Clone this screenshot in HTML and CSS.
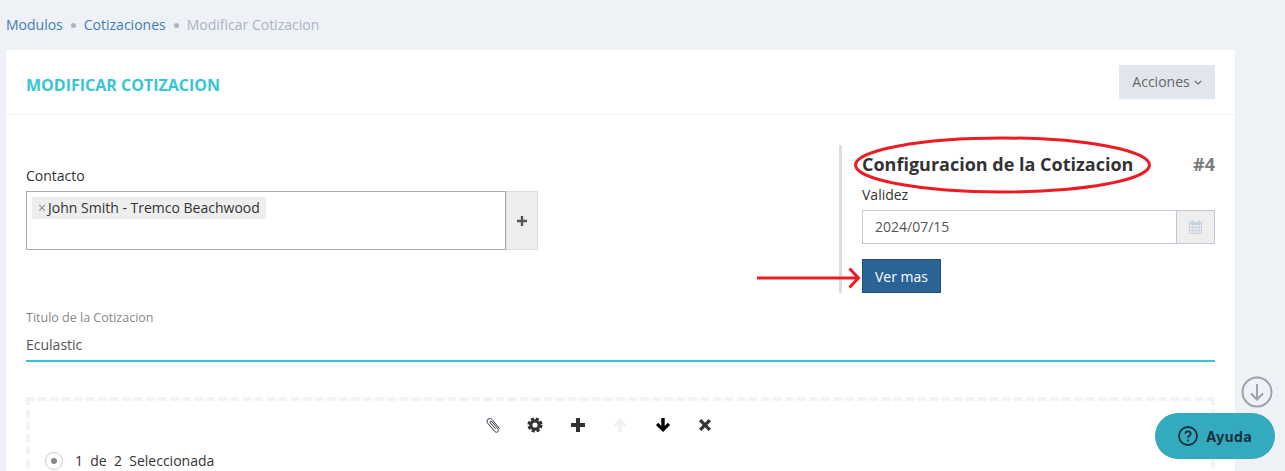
FILE: index.html
```html
<!DOCTYPE html>
<html lang="es">
<head>
  <meta charset="UTF-8" />
  <title>Modificar Cotizacion</title>
  <link rel="stylesheet" href="styles.css">
</head>
<body>
  <nav class="breadcrumb">
    <a href="#">Modulos</a>
    <span class="crumb-dot"></span>
    <a href="#">Cotizaciones</a>
    <span class="crumb-dot"></span>
    <span class="crumb-current">Modificar Cotizacion</span>
  </nav>

  <main class="card">
    <header class="card-head">
      <h1>MODIFICAR COTIZACION</h1>
      <button class="actions-btn">Acciones
        <svg class="chevron" viewBox="0 0 8 5"><path d="M.7.8 4 4 7.3.8" /></svg>
      </button>
    </header>

    <div class="card-body">
      <section class="top-row">
        <div class="contact-col">
          <label class="field-label">Contacto</label>
          <div class="contact-group">
            <div class="contact-box">
              <span class="tag"><span class="tag-x">×</span>John Smith - Tremco Beachwood</span>
            </div>
            <button class="add-btn">
              <svg viewBox="0 0 10 10"><path d="M0 3.8h3.8V0h2.4v3.8H10v2.4H6.2V10H3.8V6.2H0z" /></svg>
            </button>
          </div>
        </div>

        <aside class="config-col">
          <div class="config-head">
            <h2>Configuracion de la Cotizacion</h2>
            <span class="config-num">#4</span>
          </div>
          <label class="field-label">Validez</label>
          <div class="date-group">
            <div class="date-input">2024/07/15</div>
            <div class="date-addon">
              <svg viewBox="0 0 13 14">
                <path d="M0 2h13v12H0zM1 5v2h2.2V5zm3.2 0v2h2.2V5zm3.2 0v2h2.2V5zm3.2 0v2H12V5zM1 8v2h2.2V8zm3.2 0v2h2.2V8zm3.2 0v2h2.2V8zm3.2 0v2H12V8zM1 11v2h2.2v-2zm3.2 0v2h2.2v-2zm3.2 0v2h2.2v-2zm3.2 0v2H12v-2z" fill-rule="evenodd" />
                <path d="M2.5 0h1.5v3.4H2.500zM9 0h1.500v3.400H9z" />
              </svg>
            </div>
          </div>
          <button class="more-btn">Ver mas</button>
        </aside>
      </section>

      <section class="title-field">
        <label>Titulo de la Cotizacion</label>
        <div class="title-value">Eculastic</div>
      </section>

      <section class="dashed-box">
        <div class="tool-row">
          <svg class="tool" viewBox="0 0 16 16"><path class="clip" d="M14.600 11.800 7.400 2.800C6.300 1.400 4.500 1.100 3.100 2.100 1.800 3.100 1.700 4.900 2.800 6.300l6.800 8c.9 1 2.200 1.200 3.100.5.900-.7.900-2 .1-3L7 4.800c-.5-.6-1.200-.7-1.600-.4-.4.300-.4 1 .1 1.600l5.100 6.100" /></svg>
          <svg class="tool" viewBox="0 0 16 16"><circle class="gear-teeth" cx="8" cy="8" r="6.300" /><circle class="gear-ring" cx="8" cy="8" r="4.200" /></svg>
          <svg class="tool" viewBox="0 0 16 16"><path d="M1 6h5V1h4v5h5v4h-5v5H6v-5H1z" /></svg>
          <svg class="tool tool-off" viewBox="0 0 16 16"><path d="M8 1l7 7-2.200 2.200L9.700 7.100V15H6.300V7.100L3.200 10.200 1 8z" /></svg>
          <svg class="tool tool-black" viewBox="0 0 16 16"><path d="M8 15l7-7-2.200-2.200-3.100 3.100V1H6.300v7.900L3.200 5.800 1 8z" /></svg>
          <svg class="tool" viewBox="0 0 16 16"><path d="M4.300 2 8 5.700 11.700 2 14 4.300 10.300 8l3.700 3.700-2.300 2.300L8 10.300 4.300 14 2 11.700 5.700 8 2 4.300z" /></svg>
        </div>
        <div class="pager">
          <span class="radio"><span class="radio-dot"></span></span>
          <span class="pager-text">1&nbsp; de&nbsp; 2&nbsp; Seleccionada</span>
        </div>
      </section>
    </div>
  </main>

  <svg class="mark-ellipse" viewBox="0 0 306 64"><ellipse cx="152.500" cy="32" rx="147" ry="27" /></svg>
  <svg class="mark-arrow" viewBox="0 0 108 24"><path d="M0 12H101M92.500 2.500 101.500 12 92.500 21.500" /></svg>

  <svg class="scroll-down" viewBox="0 0 32 32"><circle cx="16" cy="16" r="14.500" /><path d="M16 8v15M10 17.500 16 23.500 22 17.500" /></svg>
  <button class="help-btn">
    <svg viewBox="0 0 20 20"><circle cx="10" cy="10" r="9" /><path d="M7.300 7.600C7.500 6 8.700 5.300 10 5.300c1.500 0 2.700.9 2.700 2.300 0 2.200-2.700 2.100-2.700 4.200" /><path class="help-dot" d="M10 14.100v.6" /></svg>
    Ayuda
  </button>
</body>
</html>
```

FILE: styles.css
```css
body {
  font-family: "Open Sans", sans-serif;
  font-size: 14px;
  margin: 0;
  height: 471px;
  overflow: hidden;
  background-color: #eef1f6;
  color: #333;
}

.breadcrumb {
  display: flex;
  align-items: center;
  height: 50px;
  padding-left: 6px;
  padding-bottom: 2px;
  box-sizing: border-box;
}

.breadcrumb a {
  color: #3f7fb5;
  text-decoration: none;
}

.crumb-dot {
  width: 5px;
  height: 5px;
  margin: 3px 8px 0;
  border-radius: 50%;
  background-color: #a9b5c6;
}

.crumb-current {
  color: #a9b5c6;
}

.card {
  width: 1229px;
  margin-left: 6px;
  height: 421px;
  overflow: hidden;
  background-color: #fff;
}

.card-head {
  display: flex;
  justify-content: space-between;
  align-items: center;
  height: 65px;
  padding: 0 20px;
  box-sizing: border-box;
  border-bottom: 1px solid #eef0f3;
}

.card-head h1 {
  margin: 6px 0 0;
  font-size: 16px;
  font-weight: 700;
  color: #36c6d3;
}

.actions-btn {
  display: flex;
  align-items: center;
  justify-content: center;
  gap: 4px;
  width: 96px;
  height: 34px;
  padding-bottom: 2px;
  border: none;
  background-color: #e1e5ec;
  color: #666;
  font-family: inherit;
  font-size: 14px;
}

.chevron {
  width: 8px;
  height: 5px;
  margin-top: 2px;
  fill: none;
  stroke: #666;
  stroke-width: 1.1;
}

.card-body {
  padding: 30px 20px 0;
}

.top-row {
  display: flex;
  justify-content: space-between;
  height: 148px;
}

.field-label {
  display: block;
  line-height: 20px;
}

.contact-col {
  width: 512px;
  padding-top: 21px;
}

.contact-group {
  display: flex;
  height: 59px;
  margin-top: 5px;
}

.contact-box {
  flex: 1;
  box-sizing: border-box;
  border: 1px solid #aaa;
  padding: 5px;
}

.tag {
  display: inline-block;
  height: 22px;
  line-height: 22px;
  padding: 0 6px;
  background-color: #eee;
  color: #333;
}

.tag-x {
  color: #888;
  margin-right: 2px;
}

.add-btn {
  width: 32px;
  padding: 0;
  margin: 0;
  border: 1px solid #ddd;
  background-color: #eee;
}

.add-btn svg {
  display: block;
  width: 10px;
  height: 10px;
  margin: 0 auto;
  fill: #555;
}

.config-col {
  width: 376px;
  box-sizing: border-box;
  border-left: 3px solid #ddd;
  padding-left: 20px;
}

.config-head {
  display: flex;
  justify-content: space-between;
  align-items: center;
  height: 38px;
  margin-bottom: 2px;
}

.config-head h2 {
  margin: 0;
  font-size: 18px;
  font-weight: 700;
  color: #333;
}

.config-num {
  font-size: 18px;
  font-weight: 700;
  color: #7a7a7a;
}

.date-group {
  display: flex;
  height: 34px;
  margin-top: 5px;
}

.date-input {
  flex: 1;
  box-sizing: border-box;
  border: 1px solid #c2cad8;
  padding: 0 12px;
  line-height: 32px;
  color: #555;
}

.date-addon {
  display: flex;
  align-items: center;
  justify-content: center;
  width: 38px;
  box-sizing: border-box;
  border: 1px solid #c2cad8;
  border-left: none;
  background-color: #eee;
}

.date-addon svg {
  width: 13px;
  height: 14px;
  fill: #c9d3e0;
}

.more-btn {
  display: block;
  width: 79px;
  height: 34px;
  margin-top: 15px;
  padding: 0;
  border: 1px solid #1f4f7a;
  background-color: #2a6496;
  color: #fff;
  font-family: inherit;
  font-size: 14px;
}

.title-field {
  margin-top: 15px;
  padding-top: 1px;
  border-bottom: 2px solid #36c6d3;
  height: 51px;
}

.title-field label {
  display: block;
  font-size: 12.500px;
  line-height: 18px;
  color: #888;
}

.title-value {
  margin-top: 8px;
  line-height: 20px;
  color: #555;
}

.dashed-box {
  margin-top: 35px;
  height: 120px;
  box-sizing: border-box;
  border: 4px dashed #f3f3f3;
  padding: 0 15px;
}

.tool-row {
  display: flex;
  justify-content: center;
  align-items: center;
  gap: 26.600px;
  height: 16px;
  margin-top: 16px;
  padding-right: 43px;
}

.tool {
  width: 16px;
  height: 16px;
  fill: #333;
}

.tool-off {
  fill: #f1f1f1;
}

.tool-black {
  fill: #000;
}

.clip {
  fill: none;
  stroke: #334;
  stroke-width: 1;
}

.gear-teeth {
  fill: none;
  stroke: #333;
  stroke-width: 2.600;
  stroke-dasharray: 3.100 1.850;
}

.gear-ring {
  fill: none;
  stroke: #333;
  stroke-width: 3.200;
}

.pager {
  display: flex;
  align-items: center;
  gap: 12px;
  margin-top: 18px;
}

.radio {
  display: flex;
  align-items: center;
  justify-content: center;
  width: 18px;
  height: 18px;
  box-sizing: border-box;
  border: 1px solid #ccc;
  border-radius: 50%;
}

.radio-dot {
  width: 6px;
  height: 6px;
  border-radius: 50%;
  background-color: #888;
}

.pager-text {
  color: #333;
}

.mark-ellipse {
  position: absolute;
  left: 850px;
  top: 133px;
  width: 306px;
  height: 64px;
  fill: none;
  stroke: #ed1c24;
  stroke-width: 3;
}

.mark-arrow {
  position: absolute;
  left: 757px;
  top: 265.500px;
  width: 108px;
  height: 24px;
  fill: none;
  stroke: #ed1c24;
  stroke-width: 3;
}

.scroll-down {
  position: absolute;
  left: 1241px;
  top: 376px;
  width: 32px;
  height: 32px;
  fill: none;
  stroke: #9aa3ae;
  stroke-width: 2;
}

.help-btn {
  position: absolute;
  left: 1155px;
  top: 413px;
  display: flex;
  align-items: center;
  justify-content: center;
  gap: 8px;
  width: 120px;
  height: 46px;
  padding: 0;
  border: none;
  border-radius: 23px;
  background-color: #33aabd;
  color: #16303d;
  font-family: Inter, sans-serif;
  font-size: 14px;
  font-weight: 700;
  letter-spacing: .5px;
}

.help-btn svg {
  width: 20px;
  height: 20px;
  fill: none;
  stroke: #16303d;
  stroke-width: 1.800;
}

.help-dot {
  stroke-linecap: round;
}
```
